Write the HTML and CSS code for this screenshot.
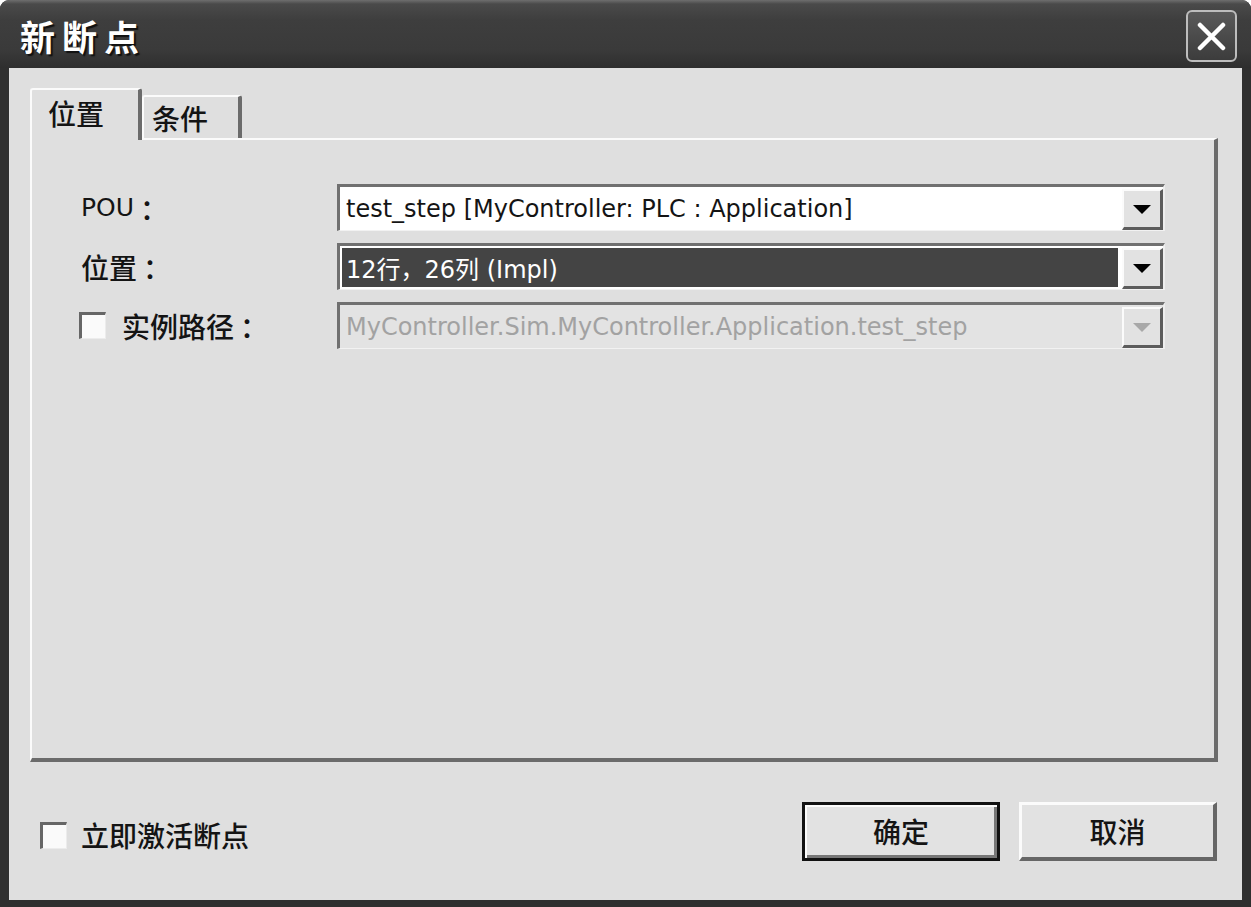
FILE: index.html
```html
<!doctype html>
<html lang="zh-CN">
<head>
  <meta charset="utf-8" />
  <title>新断点</title>
  <link rel="stylesheet" href="styles.css">
</head>
<body>
<div class="window">
  <div class="titlebar">
    <h1>新断点</h1>
    <button class="close" aria-label="关闭">
      <svg width="29" height="29" viewBox="0 0 29 29"><path d="M3 3L26 26M26 3L3 26" stroke="#fff" stroke-width="4.5" stroke-linecap="round"/></svg>
    </button>
  </div>

  <div class="frame">
    <div class="body">
      <div class="tabs">
        <div class="tab active">位置</div>
        <div class="tab">条件</div>
      </div>

      <div class="panel">
        <div class="form">
          <label class="lbl"><span class="latin">POU</span><span class="colon">：</span></label>
          <div class="combo">
            <span class="value">test_step [MyController: PLC : Application]</span>
            <span class="drop"><i></i></span>
          </div>

          <label class="lbl">位置<span class="colon">：</span></label>
          <div class="combo">
            <span class="value selected">12行，26列 (Impl)</span>
            <span class="drop"><i></i></span>
          </div>

          <label class="lbl check"><span class="box"></span>实例路径<span class="colon">：</span></label>
          <div class="combo disabled">
            <span class="value">MyController.Sim.MyController.Application.test_step</span>
            <span class="drop"><i></i></span>
          </div>
        </div>
      </div>

      <div class="footer">
        <label class="check activate"><span class="box"></span>立即激活断点</label>
        <div class="buttons">
          <button class="btn default">确定</button>
          <button class="btn">取消</button>
        </div>
      </div>
    </div>
  </div>
</div>
</body>
</html>
```

FILE: styles.css
```css
:root{
  --face:#dfdfdf;
  --dark:#6b6b6b;
  --light:#fbfbfb;
  --text:#141414;
  --cjk:"Noto Sans CJK SC",sans-serif;
  --latin:"DejaVu Sans","Noto Sans CJK SC",sans-serif;
}

*{box-sizing:border-box}
body{
  margin:0;
  background:#fff;
  font-family:var(--cjk);
  color:var(--text);
}

.window{
  width:1251px;
  height:907px;
  display:flex;
  flex-direction:column;
  background:#2f2f2f;
  border-radius:9px 9px 0 0;
  overflow:hidden;
}

/* ===== TITLE ===== */
.titlebar{
  height:68px;
  flex:none;
  display:flex;
  align-items:flex-start;
  padding-left:20px;
  background:linear-gradient(#6e6e6e 0,#4a4a4a 4px,#3e3e3e 20px,#3a3a3a 50px,#2e2e2e 68px);
}
.titlebar h1{
  margin:14px 0 0;
  font-size:35px;
  line-height:44px;
  font-weight:700;
  letter-spacing:7px;
  color:#fff;
  text-shadow:2px 2px 1px #111;
}
.close{
  margin:10px 14px 0 auto;
  width:51px;
  height:52px;
  padding:0;
  border:2px solid #bdbdbd;
  border-radius:6px;
  background:linear-gradient(#5a5a5a,#3c3c3c);
  display:flex;
  align-items:center;
  justify-content:center;
}

/* ===== FRAME / BODY ===== */
.frame{
  flex:1;
  padding:0 9px 7px;
}
.body{
  height:100%;
  background:var(--face);
  padding:20px 24px 0 21px;
}

/* ===== TABS ===== */
.tabs{
  height:50px;
  display:flex;
  align-items:flex-end;
}
.tab{
  position:relative;
  height:43px;
  width:100px;
  padding-left:8px;
  display:flex;
  align-items:center;
  font-size:28px;
  font-weight:500;
  border-top:2px solid var(--light);
  border-left:2px solid var(--light);
  border-right:4px solid var(--dark);
  border-radius:3px 3px 0 0;
  background:var(--face);
}
.tab.active{
  height:52px;
  width:112px;
  padding-left:16px;
  margin-bottom:-2px;
  z-index:1;
  padding-bottom:4px;
}

/* ===== PANEL ===== */
.panel{
  height:624px;
  border-top:2px solid var(--light);
  border-left:2px solid var(--light);
  border-right:4px solid var(--dark);
  border-bottom:4px solid var(--dark);
  padding:44px 49px 0 49px;
}
.form{
  display:grid;
  grid-template-columns:256px 1fr;
  grid-auto-rows:47px;
  row-gap:12px;
  align-items:center;
}
.lbl{
  font-size:28px;
  font-weight:500;
  display:flex;
  align-items:center;
}
.lbl .latin{
  font-family:var(--latin);
  font-size:25px;
  font-weight:400;
}
.colon{margin-left:6px}

.combo{
  height:47px;
  display:flex;
  border:3px solid;
  border-color:#707070 #eeeeee #f2f2f2 #707070;
  border-width:3px 2px 1px 3px;
  background:#fff;
  padding:2px 0 0 2px;
}
.value{
  flex:1;
  display:flex;
  align-items:center;
  padding-left:4px;
  margin-right:4px;
  margin-bottom:2px;
  font-family:var(--latin);
  font-size:24px;
  white-space:nowrap;
  overflow:hidden;
}
.value.selected{
  background:#444;
  color:#fff;
}
.drop{
  width:41px;
  border-style:solid;
  border-width:2px 3px 3px 2px;
  border-color:var(--light) #5c5c5c #5c5c5c var(--light);
  background:#e2e2e2;
  display:flex;
  align-items:center;
  justify-content:center;
}
.drop i{
  width:0;height:0;
  border-left:9px solid transparent;
  border-right:9px solid transparent;
  border-top:9px solid #000;
}
.combo.disabled{background:#e3e3e3}
.combo.disabled .value{color:#a2a2a2}
.combo.disabled .drop i{border-top-color:#a8a8a8}

/* ===== CHECKBOX ===== */
.check{
  display:flex;
  align-items:center;
  font-family:var(--cjk);
  font-size:28px;
  font-weight:500;
}
.box{
  width:27px;
  height:27px;
  margin-right:16px;
  border-style:solid;
  border-width:3px 1px 1px 3px;
  border-color:#666 #ececec #ececec #666;
  background:#fafafa;
}
.lbl.check{margin-left:-2px}

/* ===== FOOTER ===== */
.footer{
  height:138px;
  display:flex;
  align-items:center;
  justify-content:space-between;
  padding:0 1px 0 10px;
}
.activate{margin-top:8px}
.activate .box{margin-right:14px}
.buttons{display:flex;gap:19px}
.btn{
  width:198px;
  height:59px;
  font-family:var(--cjk);
  font-size:28px;
  font-weight:500;
  color:var(--text);
  background:#e2e2e2;
  border-style:solid;
  border-width:3px 4px 4px 3px;
  border-color:var(--light) #666 #666 var(--light);
  padding:0;
}
.btn.default{
  border:3px solid #111;
  box-shadow:inset 2px 2px 0 var(--light),inset -3px -3px 0 #777;
}
```
